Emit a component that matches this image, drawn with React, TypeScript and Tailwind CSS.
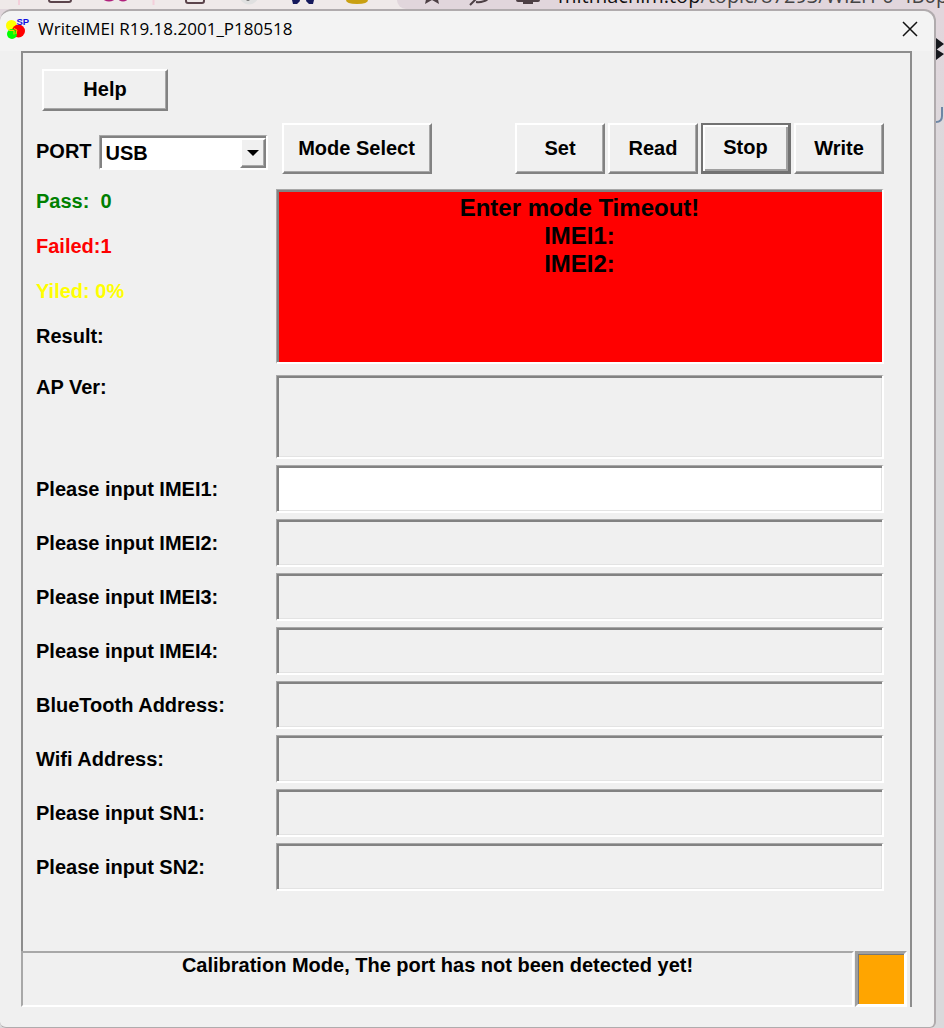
import { useState } from 'react';
import type { ButtonHTMLAttributes } from 'react';
import { clsx } from 'clsx';

// Classic 3D edges shared by the controls
const SUNKEN_EDGE = 'border-t border-l border-r-2 border-b-2 border-t-[#a8a8a8] border-l-[#a8a8a8] border-r-white border-b-white';
const SUNKEN = `${SUNKEN_EDGE} shadow-[inset_2px_2px_0_#828282,inset_-1px_-1px_0_#e3e3e3]`;
const SUNKEN_PLAIN = `${SUNKEN_EDGE} shadow-[inset_2px_2px_0_#828282]`;
const RAISED_EDGE =
  'border-2 border-t-white border-l-white border-r-[#828282] border-b-[#828282]';
const RAISED = `${RAISED_EDGE} shadow-[inset_-1px_-1px_0_#a8a8a8]`;

const FIELDS = [
  { id: 'imei1', label: 'Please input IMEI1:', enabled: true },
  { id: 'imei2', label: 'Please input IMEI2:', enabled: false },
  { id: 'imei3', label: 'Please input IMEI3:', enabled: false },
  { id: 'imei4', label: 'Please input IMEI4:', enabled: false },
  { id: 'bluetooth', label: 'BlueTooth Address:', enabled: false },
  { id: 'wifi', label: 'Wifi Address:', enabled: false },
  { id: 'sn1', label: 'Please input SN1:', enabled: false },
  { id: 'sn2', label: 'Please input SN2:', enabled: false },
];

interface PushButtonProps extends ButtonHTMLAttributes<HTMLButtonElement> {
  isDefault?: boolean;
}

// The default button gets a dark frame around its raised edge
function PushButton({ isDefault = false, className, children, ...rest }: PushButtonProps) {
  return (
    <button
      type="button"
      className={clsx(
        'bg-[#f0f0f0] pb-0.5 text-center',
        isDefault
          ? 'border-t-2 border-l-2 border-r-3 border-b-3 border-[#727272] shadow-[inset_2px_2px_0_#fff,inset_-2px_-2px_0_#a0a0a0]'
          : RAISED,
        className,
      )}
      {...rest}
    >
      {children}
    </button>
  );
}

function AppLogo() {
  return (
    <svg viewBox="0 0 24 24" className="size-6 shrink-0 overflow-visible" aria-hidden="true">
      <circle cx="5.500" cy="8.500" r="5.500" fill="#ff0" />
      <circle cx="12.500" cy="14" r="6.500" fill="#f00" />
      <circle cx="6" cy="17" r="5" fill="#0f0" />
      <path d="M3 13.5h5v4M8 11.500l3 1.500-1 4" fill="none" stroke="#fc0" strokeWidth="1" />
      <text x="10.500" y="7.500" fontSize="9.500" fontWeight="700" fill="#1010e0" fontFamily="Liberation Sans, sans-serif">
        SP
      </text>
    </svg>
  );
}

// Lower edge of the browser window that sits behind the dialog
function BrowserStrip() {
  return (
    <div className="flex h-[9px] overflow-hidden bg-[#efe9e9]">
      <svg viewBox="0 0 397 9" className="h-[9px] w-[397px] shrink-0" aria-hidden="true">
        <path d="M19 0v5M153.500 0v5" stroke="#f3cfda" strokeWidth="2" />
        <path d="M49 -4v4q0 2 2 2h18q2 0 2-2v-4M186 -4v5q0 2 2 2h14q2 0 2-2v-5" fill="none" stroke="#5b444b" strokeWidth="2" />
        <ellipse cx="109" cy="-2" rx="6" ry="3.500" fill="#b0217c" />
        <ellipse cx="123" cy="-2" rx="5" ry="3.500" fill="#b0217c" />
        <circle cx="249" cy="-5" r="9.500" fill="#e0e0e0" />
        <circle cx="248" cy="-1" r="2" fill="#777" />
        <path d="M292 0l2-4 5 1 1 4-3 3h-4zM314 0l-2-4-5 1-1 4 3 3h4z" fill="#15195c" />
        <path d="M346 -4h22v4q0 4-11 4t-11-4z" fill="#c9a012" />
      </svg>
      <div className="flex flex-1 overflow-hidden rounded-bl-xl bg-[#e1d6dc]">
        <svg viewBox="397 0 155 9" className="h-[9px] w-[155px] shrink-0" aria-hidden="true">
          <path d="M427 -5l-2 9 7-4 7 4-2-9z" fill="#4d4045" />
          <path d="M470 5l6-6M476 2q8 1 13-4" fill="none" stroke="#4d4045" strokeWidth="2" />
          <path d="M516 -4v4q0 2 2 2h5v2h10v-2h5q2 0 2-2v-4z" fill="#4d4045" />
        </svg>
        <div className="flex h-1.5 flex-col justify-end pl-1.5">
          <span className="font-['Open_Sans',sans-serif] text-xl leading-5 font-normal whitespace-nowrap text-[#444]">
            <span className="text-[#111]">mitmachim.top</span>/topic/87293/WIZH-0-4B0p
          </span>
        </div>
      </div>
    </div>
  );
}

function PageEdge() {
  return (
    <svg viewBox="0 0 8 120" className="h-[120px] w-2 shrink-0" aria-hidden="true">
      <path d="M0 29l8 6-8 6zM0 40l8 5-8 6z" fill="#15171c" />
      <path d="M6 98v9q0 6-6 6" fill="none" stroke="#6d86a5" strokeWidth="2" />
    </svg>
  );
}

export default function App() {
  const [port, setPort] = useState('USB');

  return (
    <div className="flex min-h-screen flex-col bg-[#d9d9db] font-['Liberation_Sans',Arial,sans-serif] text-xl leading-6 font-bold text-black">
      <BrowserStrip />

      <div className="flex flex-1 items-stretch bg-linear-to-b from-[#e1d6dc] from-1% to-[#d9d9db] to-20%">
        <main className="flex min-w-0 flex-1 flex-col rounded-t-xl rounded-b-md border-t-2 border-r-2 border-b border-[#b0abad] bg-[#f0f0f0]">
          {/* Title bar */}
          <header className="flex h-10 shrink-0 items-center justify-between rounded-t-xl bg-[#f3f3f3] pr-4 pb-1 pl-1.5">
            <div className="flex items-center gap-2">
              <AppLogo />
              <h1 className="font-['Open_Sans',sans-serif] text-[17px] font-normal">WriteIMEI R19.18.2001_P180518</h1>
            </div>
            <button type="button" aria-label="Close">
              <svg viewBox="0 0 16 16" className="size-4" fill="none" stroke="#111" strokeWidth="1.500">
                <path d="M1 1l14 14M15 1L1 15" />
              </svg>
            </button>
          </header>

          <div className="flex flex-1 flex-col pr-[22px] pb-5 pl-[21px]">
            {/* Main panel */}
            <section className="flex-1 border-x-2 border-t-2 border-[#8d8d8d] pt-4 pr-[26px] pb-[60px] pl-[13px]">
              <PushButton className="ml-1.5 block h-[42px] w-[126px]">Help</PushButton>

              <div className="mt-3 flex items-start">
                <div className="mt-3 flex items-center gap-[7px]">
                  <label htmlFor="port" className="pb-1">PORT</label>
                  <div className={clsx('relative h-[35px] w-[169px] bg-white pt-0.5 pl-0.5', SUNKEN_PLAIN)}>
                    <select
                      id="port"
                      value={port}
                      onChange={(e) => setPort(e.target.value)}
                      className="h-full w-full appearance-none bg-white pl-1 outline-none"
                    >
                      <option value="USB">USB</option>
                      <option value="UART">UART</option>
                    </select>
                    <span className={clsx('pointer-events-none absolute top-0.5 right-0 bottom-0 flex w-[26px] items-center justify-center bg-[#f0f0f0]', RAISED)}>
                      <svg viewBox="0 0 12 6" className="h-1.5 w-3" aria-hidden="true">
                        <path d="M0 0h12L6 6z" fill="#000" />
                      </svg>
                    </span>
                  </div>
                </div>
                <PushButton className="ml-3.5 h-[51px] w-[150px]">Mode Select</PushButton>
                <div className="ml-auto flex gap-[3px]">
                  <PushButton className="h-[51px] w-[90px]">Set</PushButton>
                  <PushButton className="h-[51px] w-[90px]">Read</PushButton>
                  <PushButton className="h-[51px] w-[90px]" isDefault>Stop</PushButton>
                  <PushButton className="h-[51px] w-[90px]">Write</PushButton>
                </div>
              </div>

              {/* Counters and result display */}
              <div className="mt-[15px] flex">
                <div className="flex w-60 shrink-0 flex-col gap-[21px]">
                  <p className="whitespace-pre text-[#008000]">{'Pass:  0'}</p>
                  <p className="text-[#ff0000]">Failed:1</p>
                  <p className="text-[#ffff00]">Yiled: 0%</p>
                  <p>Result:</p>
                </div>
                <output className={clsx('block h-[175px] flex-1 bg-[#ff0000] pt-1 text-center text-2xl leading-7', SUNKEN_PLAIN)}>
                  <p>Enter mode Timeout!</p>
                  <p>IMEI1:</p>
                  <p>IMEI2:</p>
                </output>
              </div>

              <div className="mt-[11px] flex">
                <label htmlFor="ap-version" className="w-60 shrink-0">AP Ver:</label>
                <textarea id="ap-version" readOnly className={clsx('h-[84px] min-w-0 flex-1 resize-none bg-[#f0f0f0] px-1 outline-none', SUNKEN)} />
              </div>

              {/* Input rows */}
              <div className="mt-1.5 flex flex-col gap-1.5">
                {FIELDS.map((field) => (
                  <div key={field.id} className="flex items-center">
                    <label htmlFor={field.id} className="w-60 shrink-0">{field.label}</label>
                    <input
                      id={field.id}
                      type="text"
                      disabled={!field.enabled}
                      className={clsx('h-12 min-w-0 flex-1 px-1 outline-none', SUNKEN, field.enabled ? 'bg-white' : 'bg-[#f0f0f0]')}
                    />
                  </div>
                ))}
              </div>
            </section>

            {/* Status bar */}
            <footer className="flex h-14 gap-px border-r-2 border-[#8d8d8d] pr-[3px]">
              <p className="flex-1 border-2 border-t-[#a8a8a8] border-r-white border-b-white border-l-[#a8a8a8] text-center">
                Calibration Mode, The port has not been detected yet!
              </p>
              <div className="w-[52px] border-3 border-t-[#a0a0a0] border-r-white border-b-white border-l-[#a0a0a0] bg-[#ffa500] shadow-[inset_1px_1px_0_#777]" />
            </footer>
          </div>
        </main>
        <PageEdge />
      </div>
    </div>
  );
}
